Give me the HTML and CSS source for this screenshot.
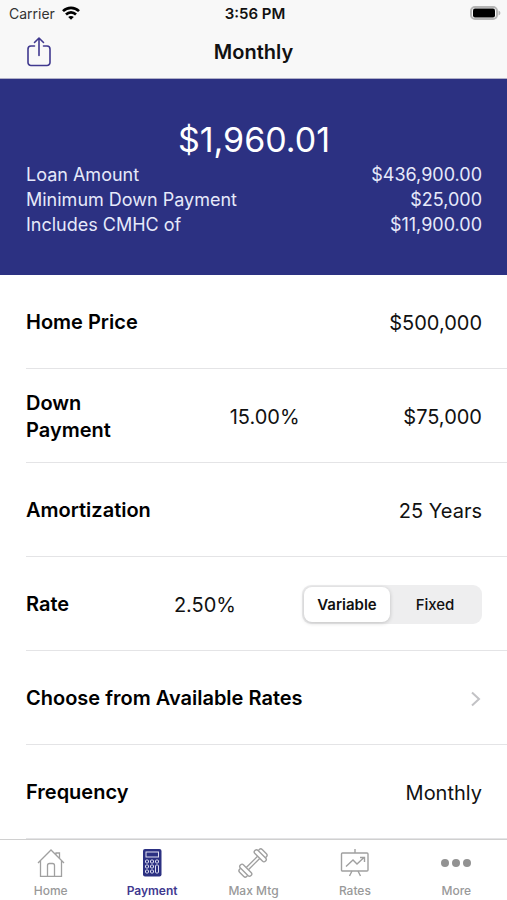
FILE: index.html
```html
<!DOCTYPE html>
<html lang="en">

<head>
    <meta charset="UTF-8">
    <meta name="viewport" content="width=device-width, initial-scale=1.0">
    <title>Monthly</title>
    <link rel="stylesheet" href="styles.css">
</head>

<body>
    <header>
        <div class="status-bar">
            <div class="carrier">
                <span>Carrier</span>
                <svg width="18" height="14" viewBox="0 0 18 14" fill="none" stroke="#000" stroke-width="2.6">
                    <path d="M1 5.2C5.500 .7 12.500 .7 17 5.200" />
                    <path d="M4 8.500c2.900-2.900 7.100-2.900 10 0" />
                    <path d="M9 13.800L6.200 11c1.600-1.500 4-1.500 5.600 0z" fill="#000" stroke="none" />
                </svg>
            </div>
            <span class="time">3:56 PM</span>
            <svg class="battery" width="31" height="14" viewBox="0 0 31 14">
                <rect x="1" y="1" width="26" height="12" rx="4" fill="none" stroke="#b5b5b5" stroke-width="2" />
                <rect x="3" y="2.500" width="22" height="9" rx="2" fill="#000" />
                <path d="M28.500 4.500c2.500 .8 2.500 4.200 0 5z" fill="#b5b5b5" />
            </svg>
        </div>
        <div class="nav-bar">
            <button class="share" aria-label="Share">
                <svg width="26" height="32" viewBox="0 0 26 32" fill="none" stroke="#40398f" stroke-width="1.600" stroke-linecap="round" stroke-linejoin="round">
                    <path d="M8.500 10H5a3 3 0 0 0-3 3v13.500a3 3 0 0 0 3 3h16a3 3 0 0 0 3-3V13a3 3 0 0 0-3-3h-3.500" />
                    <path d="M13 19.500V2M8.500 6.500L13 2l4.500 4.500" />
                </svg>
            </button>
            <h1>Monthly</h1>
        </div>
    </header>

    <section class="summary">
        <p class="payment">$1,960.01</p>
        <dl>
            <div>
                <dt>Loan Amount</dt>
                <dd>$436,900.00</dd>
            </div>
            <div>
                <dt>Minimum Down Payment</dt>
                <dd>$25,000</dd>
            </div>
            <div>
                <dt>Includes CMHC of</dt>
                <dd>$11,900.00</dd>
            </div>
        </dl>
    </section>

    <main>
        <div class="row">
            <label for="price">Home Price</label>
            <input id="price" type="text" value="$500,000">
        </div>
        <div class="row down">
            <label for="down">Down Payment</label>
            <input type="text" value="15.00%" aria-label="Down payment percent">
            <input id="down" type="text" value="$75,000">
        </div>
        <div class="row">
            <span class="label">Amortization</span>
            <button class="picker">25 Years</button>
        </div>
        <div class="row rate">
            <label for="rate">Rate</label>
            <input id="rate" type="text" value="2.50%">
            <div class="segmented">
                <input type="radio" name="type" id="variable" checked>
                <label for="variable">Variable</label>
                <input type="radio" name="type" id="fixed">
                <label for="fixed">Fixed</label>
            </div>
        </div>
        <a class="row" href="#rates">
            <span class="label">Choose from Available Rates</span>
            <svg class="chevron" width="12" height="16" viewBox="0 0 12 16" fill="none" stroke="#c2c2c5" stroke-width="2">
                <path d="M2 1.500L9 8l-7 6.500" />
            </svg>
        </a>
        <div class="row">
            <span class="label">Frequency</span>
            <button class="picker">Monthly</button>
        </div>
    </main>

    <nav class="tab-bar">
        <a href="#home">
            <svg width="30" height="30" viewBox="0 0 30 30" fill="none" stroke="#a0a0a0" stroke-width="1.300">
                <path d="M2 15L15 2l13 13M4.500 13v15.400h21V13M11.500 28V17.500q0-2 2-2h3q2 0 2 2V28M20 6.500V5h3.500v5.500" />
            </svg>
            Home
        </a>
        <a href="#payment" class="active">
            <svg width="30" height="30" viewBox="0 0 30 30">
                <rect x="6" y="1" width="18.500" height="27.500" rx="2" fill="#2c3182" />
                <rect x="9" y="4" width="12.500" height="5" fill="none" stroke="#dfe0f2" />
                <g fill="#2c3182" stroke="#dfe0f2">
                    <rect x="8.500" y="12" width="3" height="3" rx="1" />
                    <rect x="13.500" y="12" width="3" height="3" rx="1" />
                    <rect x="18.500" y="12" width="3" height="3" rx="1" />
                    <rect x="8.500" y="17" width="3" height="3" rx="1" />
                    <rect x="13.500" y="17" width="3" height="3" rx="1" />
                    <rect x="8.500" y="22" width="3" height="3" rx="1" />
                    <rect x="13.500" y="22" width="3" height="3" rx="1" />
                    <rect x="18.500" y="17" width="3" height="8" rx="1" />
                </g>
            </svg>
            Payment
        </a>
        <a href="#max">
            <svg width="30" height="30" viewBox="0 0 30 30" fill="none" stroke="#a0a0a0" stroke-width="1.400">
                <g transform="rotate(-45 15 15)">
                    <path d="M7 13.500h16M7 16.500h16" />
                    <rect x="2.500" y="7.500" width="4.500" height="15" rx="2.200" />
                    <rect x="23" y="7.500" width="4.500" height="15" rx="2.200" />
                    <path d="M2.500 10H1a2 2 0 0 0-2 2v6a2 2 0 0 0 2 2h1.500M27.500 10H29a2 2 0 0 1 2 2v6a2 2 0 0 1-2 2h-1.500" />
                </g>
            </svg>
            Max Mtg
        </a>
        <a href="#available">
            <svg width="30" height="30" viewBox="0 0 30 30" fill="none" stroke="#a0a0a0" stroke-width="1.400">
                <rect x="1.500" y="5" width="26.500" height="18" rx="1" />
                <path d="M15 1v4M12 23l-2.500 5M18 23l2.500 5M6 18.500l7-6.500 4 4 7-6.500M20 9.500h4.500V14" />
            </svg>
            Rates
        </a>
        <a href="#more">
            <svg width="30" height="30" viewBox="0 0 30 30" fill="#929292">
                <circle cx="4" cy="15" r="4" />
                <circle cx="15" cy="15" r="4" />
                <circle cx="26" cy="15" r="4" />
            </svg>
            More
        </a>
    </nav>
</body>

</html>
```

FILE: styles.css
```css
*,
*::before,
*::after {
    box-sizing: border-box;
}

body {
    margin: 0;
    min-height: 100vh;
    display: flex;
    flex-direction: column;
    font-family: Inter, "Liberation Sans", sans-serif;
    font-size: 20px;
    color: #111;
    background: #fff;
}

button,
input {
    font: inherit;
    color: inherit;
    border: none;
    padding: 0;
    background: none;
}

a {
    color: inherit;
    text-decoration: none;
}

svg {
    display: block;
}

header {
    background: #f8f8f8;
    border-bottom: 1px solid #b0b0c8;
}

.status-bar {
    display: grid;
    grid-template-columns: 1fr auto 1fr;
    align-items: center;
    height: 26px;
    padding: 0 6px 0 9px;
    font-size: 14px;
}

.carrier {
    display: flex;
    align-items: center;
    gap: 7px;
    color: #333;
}

.time {
    font-size: 15px;
    font-weight: 600;
}

.battery {
    justify-self: end;
}

.nav-bar {
    display: grid;
    grid-template-columns: 1fr auto 1fr;
    align-items: center;
    height: 52px;
    padding: 0 26px;
}

.share {
    justify-self: start;
    cursor: pointer;
}

h1 {
    margin: 0;
    font-size: 20px;
    font-weight: 600;
}

.summary {
    height: 196px;
    padding: 39px 25px 0 26px;
    background: #2c3182;
    color: #fff;
}

.payment {
    margin: 0;
    font-size: 34px;
    line-height: 44px;
    text-align: center;
}

dl {
    margin: 0;
    font-size: 18px;
    line-height: 25px;
    color: #e6e9fa;
}

dl div {
    display: flex;
    justify-content: space-between;
}

dd {
    margin: 0;
}

main {
    flex: 1;
    padding-left: 26px;
}

.row {
    display: flex;
    align-items: center;
    justify-content: space-between;
    height: 94px;
    padding: 2px 25px 0 0;
    border-bottom: 1px solid #e4e4e6;
}

.row > label,
.label {
    font-weight: 600;
    line-height: 27px;
    color: #000;
}

.row > input {
    min-width: 0;
    text-align: right;
}

.down {
    display: grid;
    grid-template-columns: 2fr 4fr 4fr;
}

.rate {
    display: grid;
    grid-template-columns: auto 1fr 180px;
}

.rate > input {
    margin-right: 66px;
}

.picker {
    cursor: pointer;
}

.segmented {
    display: grid;
    grid-template-columns: 86px 1fr;
    height: 39px;
    padding: 2px;
    border-radius: 9px;
    background: #eeeeef;
    font-size: 15px;
    font-weight: 500;
}

.segmented input {
    position: absolute;
    opacity: 0;
}

.segmented label {
    display: flex;
    align-items: center;
    justify-content: center;
    border-radius: 8px;
    cursor: pointer;
}

.segmented input:checked + label {
    background: #fff;
    font-weight: 600;
    box-shadow: 0 1px 4px rgba(0, 0, 0, 0.2);
}

.tab-bar {
    display: grid;
    grid-template-columns: repeat(5, 1fr);
    height: 61px;
    border-top: 1px solid #d0d0d0;
}

.tab-bar a {
    display: flex;
    flex-direction: column;
    align-items: center;
    gap: 5px;
    padding-top: 8px;
    font-size: 12px;
    font-weight: 500;
    line-height: 16px;
    color: #999;
}

.tab-bar .active {
    font-weight: 600;
    color: #40398f;
}
```
